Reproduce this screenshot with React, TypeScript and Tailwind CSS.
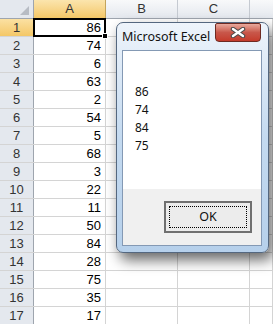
import React from 'react';

const values = [86, 74, 6, 63, 2, 54, 5, 68, 3, 22, 11, 50, 84, 28, 75, 35, 17];
const shown = [86, 74, 84, 75];

const Cell = ( { children, last }: { children?: React.ReactNode; last?: boolean } ) => (
    <div
        className={`h-full border-r border-[#d4d4d4] ${
            last ? 'flex-1' : 'w-[72px] shrink-0'
        } flex items-center justify-end pr-[4px]`}
    >
        {children}
    </div>
);

const CloseX = () => (
    <svg width="16" height="11" viewBox="0 0 16 11">
        <path d="M3 2 L13 9 M13 2 L3 9" stroke="#4a4a4a" strokeWidth="4.5" strokeLinecap="round" />
        <path d="M3 2 L13 9 M13 2 L3 9" stroke="#ffffff" strokeWidth="2.4" strokeLinecap="round" />
    </svg>
);

const MsgBox = () => (
    <div className="absolute left-[116px] top-[22px] w-[153px] h-[231px] rounded-[7px] border border-[#54677f] bg-gradient-to-b from-[#eef4fb] via-[#c4daf0] to-[#b6d0eb] shadow-[4px_7px_14px_rgba(0,0,0,0.6)] flex flex-col font-['Noto_Sans',sans-serif]">
        <div className="h-[27px] shrink-0 flex items-start justify-between">
            <div className="pl-[5px] pt-[7px] text-[12.5px] leading-[14px] text-[#111]">Microsoft Excel</div>
            <div className="mr-[7px] w-[46px] h-[19px] rounded-b-[4px] rounded-t-[2px] border border-[#6e2a22] bg-gradient-to-b from-[#e8a99d] via-[#c8574a] to-[#c43a2b] flex items-center justify-center">
                <CloseX />
            </div>
        </div>
        <div className="ml-[5px] w-[140px] h-[196px] shrink-0 border border-[#8499b4] flex flex-col">
            <div className="h-[138px] shrink-0 bg-white pt-[32px] pl-[12px] text-[12px] leading-[18px] text-[#111]">
                {shown.map( ( v ) => (
                    <div key={v}>{v}</div>
                ) )}
            </div>
            <div className="flex-1 bg-[#f0f0f0] pt-[12px] pl-[41px]">
                <div className="w-[88px] h-[32px] border-2 border-[#707070] bg-[#ececec] p-[3px]">
                    <div className="w-full h-full border border-dotted border-black flex items-center justify-center text-[12.5px] text-[#111]">
                        OK
                    </div>
                </div>
            </div>
        </div>
    </div>
);

export default function App() {
    return (
        <div className="relative w-[273px] h-[324px] overflow-hidden bg-white font-['Liberation_Sans',sans-serif] text-[13px] text-black">
            <div className="h-[19px] flex border-b border-[#9ea5ae] bg-gradient-to-b from-[#f8f9fa] to-[#e4e8ee]">
                <div className="w-[34px] shrink-0 border-r border-[#9ea5ae] relative bg-[#e4e8ee]">
                    <div className="absolute right-[4px] bottom-[3px] w-0 h-0 border-l-[9px] border-l-transparent border-b-[9px] border-b-[#b7bcc4]" />
                </div>
                <div className="w-[72px] shrink-0 border-r border-[#c3a45c] bg-gradient-to-b from-[#fbe5ad] to-[#f4c766] flex items-center justify-center text-[#333]">A</div>
                <div className="w-[72px] shrink-0 border-r border-[#c5cad1] flex items-center justify-center text-[#333]">B</div>
                <div className="w-[72px] shrink-0 border-r border-[#c5cad1] flex items-center justify-center text-[#333]">C</div>
                <div className="flex-1" />
            </div>
            {values.map( ( v, i ) => (
                <div key={i} className="h-[18px] flex border-b border-[#d4d4d4]">
                    <div
                        className={`w-[34px] shrink-0 border-r flex items-center justify-center text-[#333] ${
                            i === 0
                                ? 'bg-gradient-to-b from-[#fbe1a2] to-[#f4c766] border-[#c3a45c]'
                                : 'bg-[#e4e8ee] border-[#9ea5ae]'
                        }`}
                    >
                        {i + 1}
                    </div>
                    {i === 0 ? (
                        <div className="relative w-[72px] shrink-0 h-full border-r border-[#d4d4d4] flex items-center justify-end pr-[4px]">
                            {v}
                            <div className="absolute -left-[1px] -top-[1px] w-[73px] h-[19px] border-2 border-black" />
                            <div className="absolute -right-[3px] -bottom-[3px] w-[6px] h-[6px] bg-black border border-white" />
                        </div>
                    ) : (
                        <Cell>{v}</Cell>
                    )}
                    <Cell />
                    <Cell />
                    <Cell last />
                </div>
            ) )}
            <MsgBox />
        </div>
    );
}
